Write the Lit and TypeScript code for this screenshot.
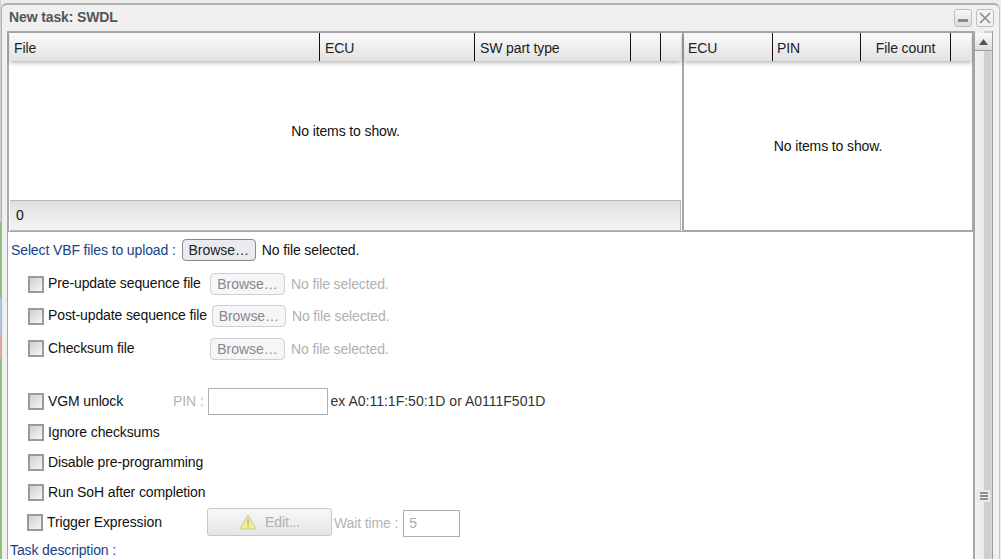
import { LitElement, html, css, svg } from "lit";
import { customElement } from "lit/decorators.js";

const leftCols = [
  { cls: "c-file", t: "File" },
  { cls: "c-ecu", t: "ECU" },
  { cls: "c-sw", t: "SW part type" },
  { cls: "c-b1", t: "" },
  { cls: "c-b2", t: "" },
];
const rightCols = [
  { cls: "r-ecu", t: "ECU" },
  { cls: "r-pin", t: "PIN" },
  { cls: "r-count", t: "File count" },
  { cls: "r-b", t: "" },
];

@customElement("app-root")
export class AppRoot extends LitElement {
  static styles = css`
    :host {
      display: block;
      width: 1001px;
      height: 559px;
      overflow: hidden;
      font-family: "Liberation Sans", Arial, sans-serif;
      font-size: 14px;
      letter-spacing: -0.12px;
      color: #111;
    }
    .desk { display: flex; width: 1001px; height: 559px; background: #ececec; overflow: hidden; }
    .strip { width: 1px; flex: none; display: flex; flex-direction: column; }
    .strip i { display: block; }
    .s1 { height: 222px; background: #cfcfcf; }
    .s2 { height: 76px; background: #8fbd7f; }
    .s3 { height: 36px; background: #b3c8e2; }
    .s4 { height: 24px; background: #e0aaa8; }
    .s5 { height: 201px; background: #8fbd7f; }
    .window {
      margin-top: 3px;
      width: 999px;
      height: 600px;
      flex: none;
      box-sizing: border-box;
      background: #f0f0f0;
      border-top: 2px solid #b0b0b0;
      border-left: 1px solid #b0b0b0;
      border-right: 1px solid #c4c4c4;
      border-top-left-radius: 6px;
      border-top-right-radius: 6px;
      display: flex;
      flex-direction: column;
    }
    .title {
      height: 26px;
      flex: none;
      display: flex;
      align-items: center;
      padding-left: 7px;
      padding-right: 5px;
      box-sizing: border-box;
      font-weight: bold;
      color: #555;
    }
    .title span { flex: 1; position: relative; top: -1px; }
    .tool {
      width: 18px;
      height: 18px;
      box-sizing: border-box;
      border: 1px solid #bdbdbd;
      border-radius: 3px;
      background: linear-gradient(#f8f8f8, #dcdcdc);
      margin-left: 4px;
      display: flex;
      align-items: center;
      justify-content: center;
      position: relative;
    }
    .tool.min { align-items: flex-end; padding-bottom: 4px; }
    .tool.close { background: #f2f2f2; }
    .tool svg { display: block; }
    .bodywrap { display: flex; flex: 1; min-height: 0; padding-left: 5px; }
    .main { width: 966px; flex: none; background: #fff; display: flex; flex-direction: column; }
    .tables { height: 201px; flex: none; display: flex; box-sizing: border-box; border-top: 2px solid #a8a8a8; }
    .tleft {
      width: 677px;
      flex: none;
      box-sizing: border-box;
      border-left: 2px solid #a8a8a8;
      border-right: 2px solid #a8a8a8;
      border-bottom: 1px solid #a8a8a8;
      padding-left: 1px;
      padding-right: 1px;
      display: flex;
      flex-direction: column;
    }
    .tright {
      width: 289px;
      flex: none;
      box-sizing: border-box;
      border-right: 1px solid #a8a8a8;
      border-bottom: 2px solid #a8a8a8;
      display: flex;
      flex-direction: column;
    }
    .thead {
      height: 28px;
      flex: none;
      display: flex;
      background: linear-gradient(#fbfbfb, #e2e2e2);
      box-shadow: 0 2px 4px rgba(0, 0, 0, 0.28);
      position: relative;
    }
    .tright .thead { width: 287px; }
    .th {
      box-sizing: border-box;
      border-right: 1px solid #111;
      display: flex;
      align-items: center;
      padding-left: 5px;
      padding-top: 2px;
      flex: none;
      color: #222;
    }
    .th:last-child { border-right: none; }
    .c-file { width: 310px; padding-left: 4px; }
    .c-ecu { width: 155px; }
    .c-sw { width: 156px; }
    .c-b1 { width: 30px; }
    .c-b2 { width: 20px; }
    .r-ecu { width: 89px; padding-left: 4px; }
    .r-pin { width: 88px; padding-left: 4px; }
    .r-count { width: 90px; padding-left: 0; justify-content: center; }
    .r-b { width: 20px; }
    .empty { flex: 1; display: flex; align-items: center; justify-content: center; color: #111; }
    .tfoot {
      height: 31px;
      flex: none;
      box-sizing: border-box;
      border: 1px solid #b8b8b8;
      border-left: none;
      background: linear-gradient(#e0e0e0, #f4f4f4);
      display: flex;
      align-items: center;
      padding-left: 6px;
      padding-bottom: 2px;
    }
    .form { border-left: 1px solid #a8a8a8; flex: none; display: flex; flex-direction: column; }
    .row { display: flex; align-items: center; flex: none; box-sizing: border-box; white-space: nowrap; padding-left: 20px; }
    .h36 { height: 36px; padding-left: 3px; }
    .h32 { height: 32px; }
    .h33 { height: 33px; }
    .h30 { height: 30px; }
    .h26 { height: 26px; padding-left: 2px; }
    .gap { height: 20px; flex: none; }
    .row.trigger { padding-left: 19px; }
    .blue { color: #15428b; }
    .cb {
      width: 16px;
      height: 17px;
      flex: none;
      box-sizing: border-box;
      border: 2px solid #9a9a9a;
      background: linear-gradient(135deg, #d0d0d0, #f6f6f6);
      margin-right: 4px;
    }
    .lbl { position: relative; top: -1px; }
    .w-lbl-pre { width: 162px; }
    .w-lbl-check { width: 162px; }
    .w-lbl-vgm { width: 125px; }
    .w-lbl-trg { width: 160px; }
    .browse {
      font: 14px "Liberation Sans", Arial, sans-serif;
      width: 74px;
      height: 22px;
      box-sizing: border-box;
      padding: 0;
      border: 1px solid #8a8a8a;
      border-radius: 4px;
      background: #ebebef;
      color: #222;
      flex: none;
      letter-spacing: -0.05px;
    }
    .browse.off {
      width: 75px;
      border-color: #d0d0d0;
      background: #f6f6f8;
      color: #888;
    }
    .browse.off.short { width: 74px; margin-left: 5px; }
    .h36 .lab { margin-right: 6px; }
    .fn { margin-left: 6px; }
    .fn.off { color: #b0b0b0; }
    .pin { color: #b4b4b4; margin-right: 4px; }
    .tb {
      box-sizing: border-box;
      border: 1px solid #b0b0b0;
      background: #fff;
      flex: none;
      font: 14px "Liberation Sans", Arial, sans-serif;
      padding: 0 5px;
      color: #aaa;
    }
    .tb-pin { width: 120px; height: 27px; }
    .ex { margin-left: 3px; color: #333; letter-spacing: 0; }
    .edit {
      width: 125px;
      height: 28px;
      box-sizing: border-box;
      flex: none;
      border: 1px solid #c8c8c8;
      border-radius: 3px;
      background: linear-gradient(#f8f8f8, #e6e6e6);
      display: flex;
      align-items: center;
      justify-content: center;
      gap: 8px;
      color: #b0b0b0;
      font-size: 14px;
    }
    .wait { color: #b4b4b4; margin-left: 2px; margin-right: 5px; position: relative; top: 1px; }
    .tb-wait { width: 57px; height: 27px; position: relative; top: 1px; color: #aaa; display: flex; align-items: center; }
    .sb {
      width: 26px;
      flex: none;
      display: flex;
      border-left: 2px solid #a8a8a8;
      box-sizing: border-box;
    }
    .track {
      width: 18px;
      flex: none;
      display: flex;
      flex-direction: column;
      padding-top: 2px;
      box-sizing: border-box;
      border-right: 1px solid #9c9c9c;
      background: linear-gradient(90deg, #f0f0f0 0%, #ececec 50%, #cfcfcf 55%, #cfcfcf 90%, #dcdcdc 100%);
    }
    .up {
      height: 18px;
      flex: none;
      box-sizing: border-box;
      background: linear-gradient(#fafafa, #dcdcdc);
      border-bottom: 1px solid #9c9c9c;
      display: flex;
      align-items: center;
      justify-content: center;
    }
    .thumb-space { height: 439px; flex: none; }
    .grip {
      width: 13px;
      height: 12px;
      margin-left: 2px;
      flex: none;
      box-sizing: border-box;
      background: #ededed;
      border: 1px solid #e4e4e4;
      padding: 1px 1px 1px 2px;
      display: flex;
      flex-direction: column;
      justify-content: space-between;
    }
    .grip i { display: block; height: 2px; background: #8a8a8a; }
  `;

  private cb() {
    return html`<span class="cb"></span>`;
  }

  private warn() {
    return svg`<svg width="18" height="16" viewBox="0 0 18 16"><path d="M9 1 L17 15 H1 Z" fill="#f7ee8a" stroke="#c4c4a0" stroke-width="1"/><rect x="8.4" y="5.5" width="1.3" height="5" fill="#a8a890"/><rect x="8.4" y="11.5" width="1.3" height="1.5" fill="#a8a890"/></svg>`;
  }

  render() {
    return html`
      <div class="desk">
        <div class="strip"><i class="s1"></i><i class="s2"></i><i class="s3"></i><i class="s4"></i><i class="s5"></i></div>
        <div class="window">
          <div class="title">
            <span>New task: SWDL</span>
            <div class="tool min">
              <svg width="10" height="3" viewBox="0 0 10 3"><rect x="0" y="0" width="10" height="3" fill="#8a8a8a"/></svg>
            </div>
            <div class="tool close">
              <svg width="12" height="12" viewBox="0 0 12 12"><path d="M1 1 L11 11 M11 1 L1 11" stroke="#8a8a8a" stroke-width="1.6" fill="none"/></svg>
            </div>
          </div>
          <div class="bodywrap">
            <div class="main">
              <div class="tables">
                <div class="tleft">
                  <div class="thead">${leftCols.map((c) => html`<div class="th ${c.cls}">${c.t}</div>`)}</div>
                  <div class="empty">No items to show.</div>
                  <div class="tfoot">0</div>
                </div>
                <div class="tright">
                  <div class="thead">${rightCols.map((c) => html`<div class="th ${c.cls}">${c.t}</div>`)}</div>
                  <div class="empty">No items to show.</div>
                </div>
              </div>
              <div class="form">
                <div class="row h36">
                  <span class="blue lab">Select VBF files to upload :</span>
                  <button class="browse">Browse…</button>
                  <span class="fn">No file selected.</span>
                </div>
                <div class="row h32">
                  ${this.cb()}<span class="lbl w-lbl-pre">Pre-update sequence file</span>
                  <button class="browse off">Browse…</button>
                  <span class="fn off">No file selected.</span>
                </div>
                <div class="row h32">
                  ${this.cb()}<span class="lbl">Post-update sequence file</span>
                  <button class="browse off short">Browse…</button>
                  <span class="fn off">No file selected.</span>
                </div>
                <div class="row h33">
                  ${this.cb()}<span class="lbl w-lbl-check">Checksum file</span>
                  <button class="browse off">Browse…</button>
                  <span class="fn off">No file selected.</span>
                </div>
                <div class="gap"></div>
                <div class="row h32">
                  ${this.cb()}<span class="w-lbl-vgm">VGM unlock</span>
                  <span class="pin">PIN :</span>
                  <div class="tb tb-pin"></div>
                  <span class="ex">ex A0:11:1F:50:1D or A0111F501D</span>
                </div>
                <div class="row h30">${this.cb()}<span>Ignore checksums</span></div>
                <div class="row h30">${this.cb()}<span>Disable pre-programming</span></div>
                <div class="row h30">${this.cb()}<span>Run SoH after completion</span></div>
                <div class="row h30 trigger">
                  ${this.cb()}<span class="w-lbl-trg">Trigger Expression</span>
                  <div class="edit">${this.warn()}<span>Edit...</span></div>
                  <span class="wait">Wait time :</span>
                  <div class="tb tb-wait">5</div>
                </div>
                <div class="row h26"><span class="blue">Task description :</span></div>
              </div>
            </div>
            <div class="sb">
              <div class="track">
                <div class="up">
                  <svg width="9" height="6" viewBox="0 0 9 6"><path d="M4.5 0 L9 6 H0 Z" fill="#555"/></svg>
                </div>
                <div class="thumb-space"></div>
                <div class="grip"><i></i><i></i><i></i></div>
              </div>
            </div>
          </div>
        </div>
      </div>
    `;
  }
}
